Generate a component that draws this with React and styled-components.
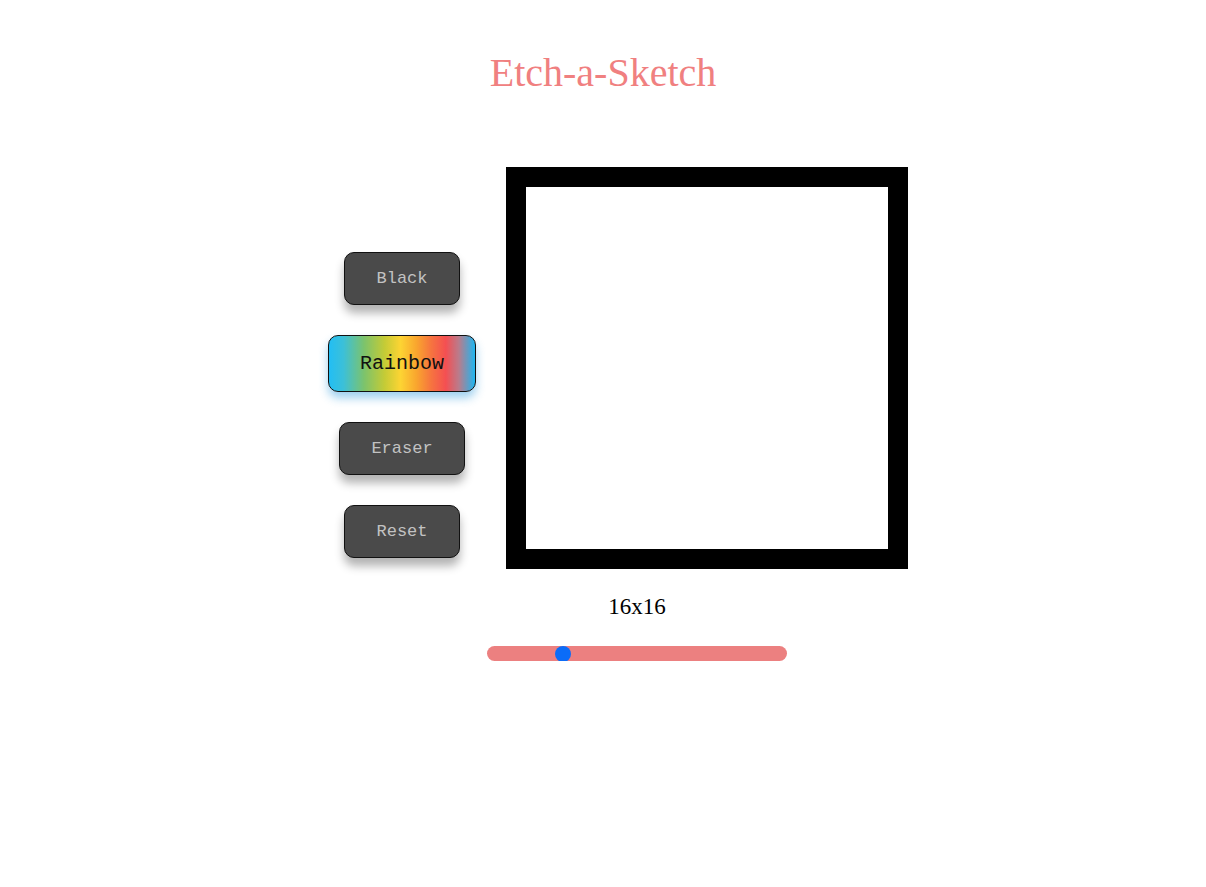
import React, { useState } from 'react';
import styled, { createGlobalStyle, css } from 'styled-components';

const GlobalStyle = createGlobalStyle`
  body {
    margin: 0;
    background: #ffffff;
    font-family: "Liberation Serif", "Times New Roman", serif;
  }
`;

const Page = styled.div`
  display: flex;
  flex-direction: column;
  align-items: center;
`;

const Title = styled.h1`
  margin: 49px 0 0;
  font-size: 40px;
  font-weight: 400;
  line-height: normal;
  color: #f08080;
`;

const Main = styled.main`
  align-self: stretch;
  display: flex;
  justify-content: center;
  align-items: flex-start;
  gap: 30px;
  margin-top: 71px;
  padding-left: 30px;
`;

const ToolColumn = styled.div`
  width: 148px;
  display: flex;
  flex-direction: column;
  align-items: center;
  gap: 30px;
  padding-top: 85px;
`;

const ToolButton = styled.button`
  height: 53px;
  padding: 0 31px;
  border: 1px solid #111;
  border-radius: 10px;
  background: #4a4a4a;
  color: #c2c2c2;
  font-family: "Liberation Mono", "Courier New", monospace;
  font-size: 17px;
  box-shadow: 0 8px 10px rgba(0, 0, 0, 0.3);
  cursor: pointer;

  ${props => props.$active && css`
    height: 57px;
    font-size: 20px;
    color: #111;
    background: linear-gradient(
      to right,
      #22bef4 0%,
      #3cc0d8 10%,
      #7cc36c 24%,
      #c4cb36 38%,
      #fdd433 49%,
      #f9a52e 60%,
      #f6743f 70%,
      #f44f52 80%,
      #b97c8c 89%,
      #1db6f1 100%
    );
    box-shadow: 0 6px 10px rgba(40, 150, 220, 0.45);
  `}
`;

const BoardColumn = styled.div`
  display: flex;
  flex-direction: column;
`;

const Board = styled.div`
  width: 362px;
  height: 362px;
  border: 20px solid #000;
  background: #fff;
  display: grid;
  grid-template-columns: repeat(${props => props.size}, 1fr);
`;

const Controls = styled.div`
  width: 300px;
  margin-left: -19px;
  display: flex;
  flex-direction: column;
  align-items: center;
`;

const SizeLabel = styled.div`
  margin-top: 25px;
  font-size: 23px;
  line-height: 26px;
  color: #000;
`;

const Slider = styled.input`
  -webkit-appearance: none;
  appearance: none;
  width: 300px;
  height: 15px;
  margin: 26px 0 0;
  border-radius: 8px;
  background: #ec8080;
  outline: none;

  &::-webkit-slider-thumb {
    -webkit-appearance: none;
    appearance: none;
    width: 16px;
    height: 16px;
    border-radius: 50%;
    background: #0b6cf8;
    border: none;
    cursor: pointer;
  }
`;

const modes = ['Black', 'Rainbow', 'Eraser', 'Reset'];

const App = () => {
  const [mode, setMode] = useState('Rainbow');
  const [size, setSize] = useState(16);

  return (
    <Page>
      <GlobalStyle />
      <Title>Etch-a-Sketch</Title>
      <Main>
        <ToolColumn>
          {modes.map(m => (
            <ToolButton
              key={m}
              $active={mode === m}
              onClick={() => m !== 'Reset' && setMode(m)}
            >
              {m}
            </ToolButton>
          ))}
        </ToolColumn>
        <BoardColumn>
          <Board size={size} />
          <Controls>
            <SizeLabel>{size}x{size}</SizeLabel>
            <Slider
              type="range"
              min="1"
              max="64"
              value={size}
              onChange={e => setSize(Number(e.target.value))}
            />
          </Controls>
        </BoardColumn>
      </Main>
    </Page>
  );
};

export default App;
